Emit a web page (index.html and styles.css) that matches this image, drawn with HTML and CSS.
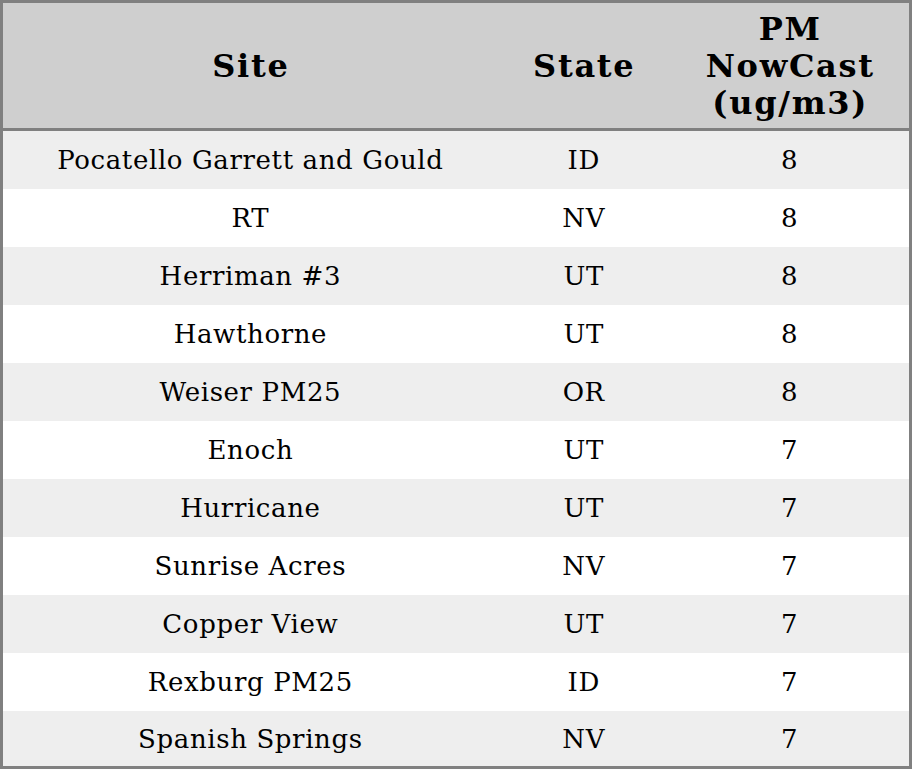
FILE: index.html
```html
<!DOCTYPE html>
<html>
<head>
<meta charset="utf-8">
<link rel="stylesheet" href="styles.css">
</head>
<body>
<table class="tbl">
  <colgroup>
    <col class="c-site">
    <col class="c-state">
    <col class="c-pm">
  </colgroup>
  <thead>
    <tr><th>Site</th><th>State</th><th>PM<br>NowCast<br>(ug/m3)</th></tr>
  </thead>
  <tbody>
    <tr><td>Pocatello Garrett and Gould</td><td>ID</td><td>8</td></tr>
    <tr><td>RT</td><td>NV</td><td>8</td></tr>
    <tr><td>Herriman #3</td><td>UT</td><td>8</td></tr>
    <tr><td>Hawthorne</td><td>UT</td><td>8</td></tr>
    <tr><td>Weiser PM25</td><td>OR</td><td>8</td></tr>
    <tr><td>Enoch</td><td>UT</td><td>7</td></tr>
    <tr><td>Hurricane</td><td>UT</td><td>7</td></tr>
    <tr><td>Sunrise Acres</td><td>NV</td><td>7</td></tr>
    <tr><td>Copper View</td><td>UT</td><td>7</td></tr>
    <tr><td>Rexburg PM25</td><td>ID</td><td>7</td></tr>
    <tr><td>Spanish Springs</td><td>NV</td><td>7</td></tr>
  </tbody>
</table>
</body>
</html>
```
FILE: styles.css
```css
html, body { margin: 0; padding: 0; background: #fff; }
.tbl {
  width: 912px;
  border-collapse: collapse;
  border: 3px solid #808080;
  font-family: "DejaVu Serif", serif;
  color: #000;
  table-layout: fixed;
}
.c-site { width: 494px; }
.c-state { width: 172px; }
.c-pm { width: 240px; }
.tbl th {
  background: #cfcfcf;
  font-size: 32px;
  font-weight: bold;
  letter-spacing: 1.7px;
  line-height: 37px;
  height: 123px;
  padding: 2px 0 0 1.7px;
  text-align: center;
  vertical-align: middle;
  border-bottom: 3px solid #808080;
}
.tbl td {
  font-size: 26px;
  letter-spacing: 0.62px;
  height: 58px;
  padding: 0 0 0 0.62px;
  text-align: center;
  vertical-align: middle;
}
.tbl tbody tr:last-child td { height: 55px; }
.tbl tbody tr:nth-child(odd) td { background: #eeeeee; }
```
